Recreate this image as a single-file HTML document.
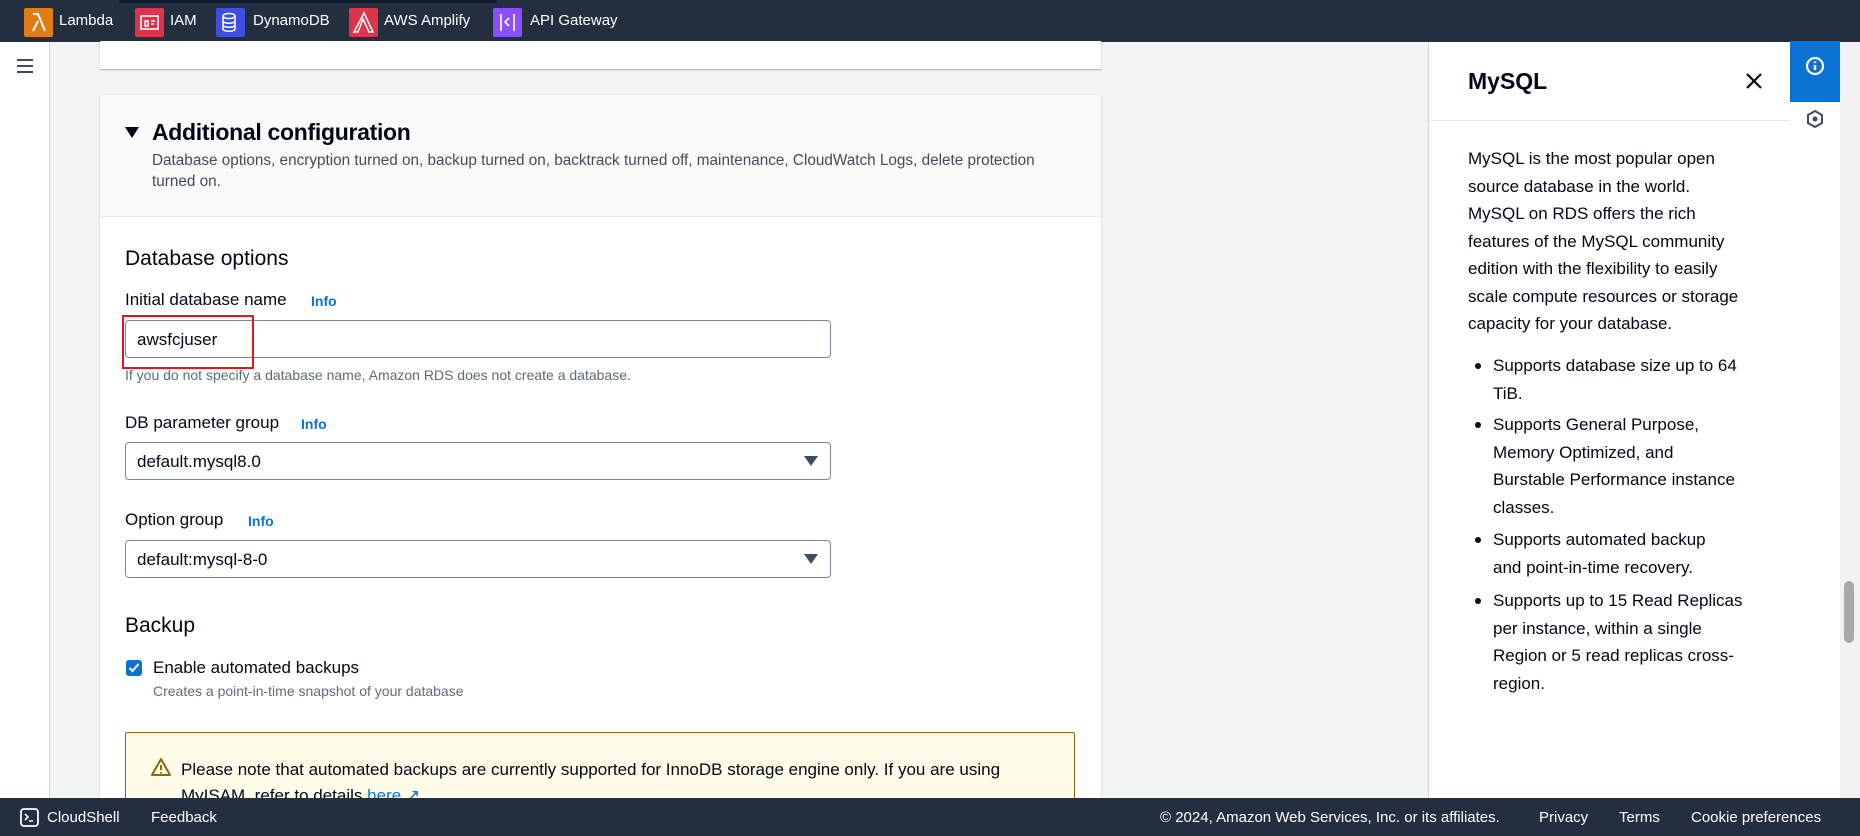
<!DOCTYPE html>
<html><head><meta charset="utf-8"><style>
*{margin:0;padding:0;box-sizing:border-box}
body{width:1860px;height:836px;overflow:hidden;background:#f2f3f3;font-family:"Liberation Sans",sans-serif;color:#000716;position:relative}
.a{position:absolute;white-space:nowrap}
.top{left:0;top:0;width:1860px;height:42px;background:#232f3e}
.sc{top:8px;width:29px;height:29px;border-radius:2px}
.st{top:12px;color:#fff;font-size:15px}
.info{color:#0972d3;font-weight:bold;font-size:14px}
.lbl{font-size:17px;color:#000716}
.inp{left:125px;width:706px;height:38px;background:#fff;border:1px solid #7d8998;border-radius:4px;font-size:17px;padding:9px 11px}
.caret{position:absolute;right:12px;top:13px;width:0;height:0;border-left:7px solid transparent;border-right:7px solid transparent;border-top:10px solid #414d5c}
.pt{left:1468px;font-size:17px;color:#000716;line-height:27.5px}
.foot{color:#fff;font-size:15px;top:809px}
</style></head><body>
<div class="a top"></div>
<div class="a" style="left:119px;top:0;width:378px;height:3px;background:#0f1b2a"></div>
<div class="a sc" style="left:24px;background:#e07b15"><svg width="29" height="29"><path d="M9 6h5l7 17M14 13l-5 10" stroke="#fff" stroke-width="2" fill="none"/></svg></div>
<div class="a st" style="left:59px">Lambda</div>
<div class="a sc" style="left:135px;background:#dd344c"><svg width="29" height="29"><rect x="6" y="8" width="17" height="13" stroke="#fff" fill="none" stroke-width="1.6"/><path d="M10 13h3v5h-3zM16 13h4M16 16h3" stroke="#fff" stroke-width="1.5" fill="none"/></svg></div>
<div class="a st" style="left:170px">IAM</div>
<div class="a sc" style="left:216px;background:#3f4ee0"><svg width="29" height="29"><ellipse cx="13" cy="8" rx="6" ry="2.5" stroke="#fff" fill="none" stroke-width="1.5"/><path d="M7 8v13c0 3 12 3 12 0V8M7 13c0 3 12 3 12 0M7 17c0 3 12 3 12 0" stroke="#fff" fill="none" stroke-width="1.5"/></svg></div>
<div class="a st" style="left:253px">DynamoDB</div>
<div class="a sc" style="left:349px;background:#dd344c"><svg width="29" height="29"><path d="M15 5l9 19h-4L14 11 9 24H5z" stroke="#fff" fill="none" stroke-width="1.5"/></svg></div>
<div class="a st" style="left:384px">AWS Amplify</div>
<div class="a sc" style="left:493px;background:#8c4fff"><svg width="29" height="29"><path d="M8 6v17M21 6v17M16 10l-4 4 4 4" stroke="#fff" fill="none" stroke-width="1.6"/></svg></div>
<div class="a st" style="left:530px">API Gateway</div>

<div class="a" style="left:0;top:42px;width:50px;height:756px;background:#fff;border-right:1px solid #d1d5db"></div>
<div class="a" style="left:17px;top:59px;width:16px;height:2px;background:#414d5c;box-shadow:0 6px 0 #414d5c,0 12px 0 #414d5c"></div>

<div class="a" style="left:100px;top:41px;width:1001px;height:28px;background:#fff;box-shadow:0 1px 1px #aab"></div>
<div class="a" style="left:100px;top:95px;width:1001px;height:710px;background:#fff;box-shadow:0 1px 2px #ccc"></div>
<div class="a" style="left:100px;top:95px;width:1001px;height:122px;background:#fafafa;border-bottom:1px solid #e9ebed"></div>
<div class="a" style="left:125px;top:127px;width:0;height:0;border-left:7px solid transparent;border-right:7px solid transparent;border-top:11px solid #000716"></div>
<div class="a" style="left:152px;top:119px;font-size:23px;font-weight:bold;letter-spacing:-0.3px">Additional configuration</div>
<div class="a" style="left:152px;top:150px;font-size:15.3px;line-height:21px;color:#414d5c">Database options, encryption turned on, backup turned on, backtrack turned off, maintenance, CloudWatch Logs, delete protection<br>turned on.</div>

<div class="a" style="left:125px;top:247px;font-size:21px">Database options</div>
<div class="a lbl" style="left:125px;top:290px">Initial database name</div>
<div class="a info" style="left:311px;top:293px">Info</div>
<div class="a inp" style="top:320px">awsfcjuser</div>
<div class="a" style="left:122px;top:315px;width:132px;height:54px;border:2px solid #e4141b"></div>
<div class="a" style="left:125px;top:367px;font-size:14px;color:#5f6b7a">If you do not specify a database name, Amazon RDS does not create a database.</div>

<div class="a lbl" style="left:125px;top:413px">DB parameter group</div>
<div class="a info" style="left:301px;top:416px">Info</div>
<div class="a inp" style="top:442px">default.mysql8.0<div class="caret"></div></div>
<div class="a lbl" style="left:125px;top:510px">Option group</div>
<div class="a info" style="left:248px;top:513px">Info</div>
<div class="a inp" style="top:540px">default:mysql-8-0<div class="caret"></div></div>

<div class="a" style="left:125px;top:614px;font-size:21px">Backup</div>
<div class="a" style="left:126px;top:660px;width:16px;height:16px;background:#0972d3;border-radius:3px"><svg width="16" height="16"><path d="M3.5 8l3 3 6-7" stroke="#fff" stroke-width="2" fill="none"/></svg></div>
<div class="a lbl" style="left:153px;top:658px">Enable automated backups</div>
<div class="a" style="left:153px;top:683px;font-size:14px;color:#5f6b7a">Creates a point-in-time snapshot of your database</div>

<div class="a" style="left:125px;top:732px;width:950px;height:80px;background:#fffce9;border:1px solid #8d6605;border-radius:2px"></div>
<svg class="a" style="left:150px;top:757px" width="22" height="20"><path d="M11 2L2 18h18z" stroke="#8d6605" stroke-width="2" fill="none" stroke-linejoin="round"/><path d="M11 8v5M11 15v1.5" stroke="#8d6605" stroke-width="2"/></svg>
<div class="a" style="left:181px;top:757px;font-size:17px;line-height:26px">Please note that automated backups are currently supported for InnoDB storage engine only. If you are using<br>MyISAM, refer to details <span style="color:#0972d3;text-decoration:underline">here</span> <span style="color:#0972d3">&#x2197;</span></div>

<div class="a" style="left:1428px;top:42px;width:362px;height:756px;background:#fff;border-left:1px solid #d1d5db"></div>
<div class="a" style="left:1468px;top:68px;font-size:23px;font-weight:bold">MySQL</div>
<svg class="a" style="left:1745px;top:72px" width="18" height="18"><path d="M2 2l14 14M16 2L2 16" stroke="#000716" stroke-width="2.2"/></svg>
<div class="a" style="left:1429px;top:120px;width:361px;height:1px;background:#e9ebed"></div>
<div class="a pt" style="top:145px">MySQL is the most popular open<br>source database in the world.<br>MySQL on RDS offers the rich<br>features of the MySQL community<br>edition with the flexibility to easily<br>scale compute resources or storage<br>capacity for your database.</div>
<div class="a pt" style="left:1493px;top:352px">Supports database size up to 64<br>TiB.</div>
<div class="a pt" style="left:1493px;top:411px">Supports General Purpose,<br>Memory Optimized, and<br>Burstable Performance instance<br>classes.</div>
<div class="a pt" style="left:1493px;top:526px">Supports automated backup<br>and point-in-time recovery.</div>
<div class="a pt" style="left:1493px;top:587px">Supports up to 15 Read Replicas<br>per instance, within a single<br>Region or 5 read replicas cross-<br>region.</div>
<div class="a" style="left:1475px;top:363px;width:6px;height:6px;border-radius:3px;background:#000716;box-shadow:0 59px 0 #000716,0 174px 0 #000716,0 235px 0 #000716"></div>

<div class="a" style="left:1790px;top:42px;width:50px;height:756px;background:#fff"></div>
<div class="a" style="left:1790px;top:41px;width:50px;height:61px;background:#0972d3"></div>
<svg class="a" style="left:1805px;top:56px" width="20" height="20"><circle cx="10" cy="10" r="8" stroke="#fff" stroke-width="2.2" fill="none"/><path d="M10 9v5M10 5.5v1.5" stroke="#fff" stroke-width="2.4"/></svg>
<svg class="a" style="left:1806px;top:109px" width="18" height="20"><path d="M9 2l7 4v8l-7 4-7-4V6z" stroke="#414d5c" stroke-width="2" fill="none"/><circle cx="9" cy="10" r="2.5" fill="#414d5c"/></svg>
<div class="a" style="left:1840px;top:42px;width:20px;height:794px;background:#f1f1f1"></div>
<div class="a" style="left:1844px;top:581px;width:10px;height:62px;background:#a8a8a8;border-radius:5px"></div>

<div class="a" style="left:0;top:798px;width:1860px;height:38px;background:#232f3e"></div>
<svg class="a" style="left:20px;top:808px" width="19" height="19"><rect x="1" y="1" width="17" height="17" rx="3" stroke="#fff" stroke-width="1.8" fill="none"/><path d="M5 6l3 3-3 3M9 13h4" stroke="#fff" stroke-width="1.6" fill="none"/></svg>
<div class="a foot" style="left:47px">CloudShell</div>
<div class="a foot" style="left:151px">Feedback</div>
<div class="a foot" style="left:1160px">© 2024, Amazon Web Services, Inc. or its affiliates.</div>
<div class="a foot" style="left:1539px">Privacy</div>
<div class="a foot" style="left:1619px">Terms</div>
<div class="a foot" style="left:1691px">Cookie preferences</div>
</body></html>
